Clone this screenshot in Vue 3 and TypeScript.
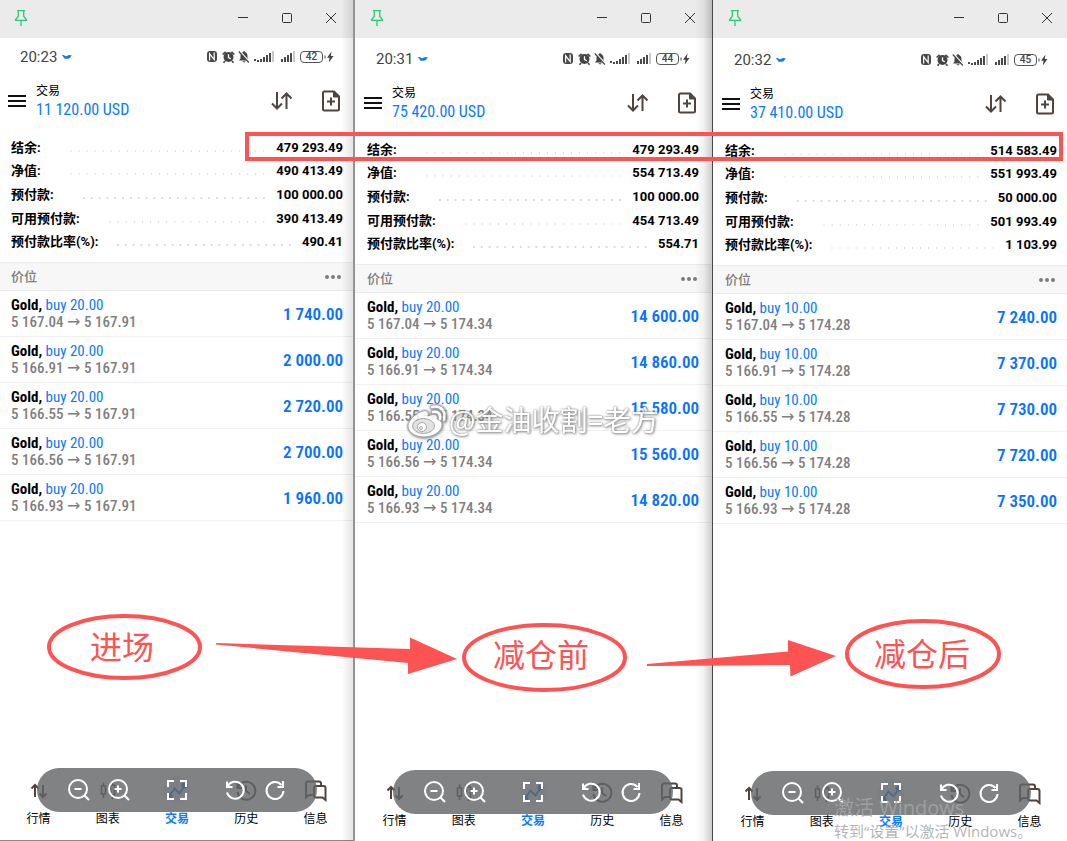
<script setup lang="ts">
interface Balance { label: string; value: string; tight?: boolean }
interface Position { volume: string; open: string; current: string; profit: string }
interface Panel {
  id: string
  time: string
  battery: string
  total: string
  balances: Balance[]
  positions: Position[]
}

const labels = ['结余:', '净值:', '预付款:', '可用预付款:', '预付款比率(%):']
const opens = ['5 167.04', '5 166.91', '5 166.55', '5 166.56', '5 166.93']

function makePanel(
  id: string, time: string, battery: string, total: string,
  values: string[], volume: string, current: string, profits: string[],
): Panel {
  return {
    id, time, battery, total,
    balances: labels.map((label, i) => ({ label, value: values[i], tight: i === 4 })),
    positions: opens.map((open, i) => ({ volume, open, current, profit: profits[i] })),
  }
}

const panels: Panel[] = [
  makePanel('entry', '20:23', '42', '11 120.00 USD',
    ['479 293.49', '490 413.49', '100 000.00', '390 413.49', '490.41'],
    '20.00', '5 167.91', ['1 740.00', '2 000.00', '2 720.00', '2 700.00', '1 960.00']),
  makePanel('before', '20:31', '44', '75 420.00 USD',
    ['479 293.49', '554 713.49', '100 000.00', '454 713.49', '554.71'],
    '20.00', '5 174.34', ['14 600.00', '14 860.00', '15 580.00', '15 560.00', '14 820.00']),
  makePanel('after', '20:32', '45', '37 410.00 USD',
    ['514 583.49', '551 993.49', '50 000.00', '501 993.49', '1 103.99'],
    '10.00', '5 174.28', ['7 240.00', '7 370.00', '7 730.00', '7 720.00', '7 350.00']),
]
const tabs = ['行情', '图表', '交易', '历史', '信息']
</script>

<template>
  <main class="desktop">
    <section v-for="p in panels" :key="p.id" class="window" :class="p.id">
      <header class="titlebar">
        <button class="pin" aria-label="Pin">
          <svg width="14" height="18" viewBox="0 0 14 18" fill="none" stroke="#2dc878" stroke-width="1.3">
            <path d="M3 1.7h8M4.3 2v5.2L1.5 10.8v.6h11v-.6L9.7 7.200V2M7 11.500V17" />
          </svg>
        </button>
        <div class="captions">
          <button aria-label="Minimize">
            <svg width="12" height="12" viewBox="0 0 12 12" fill="none" stroke="#333"><path d="M1 5.500h10" /></svg>
          </button>
          <button aria-label="Maximize">
            <svg width="12" height="12" viewBox="0 0 12 12" fill="none" stroke="#333"><rect x="1.500" y="1.500" width="9" height="9" rx="1" /></svg>
          </button>
          <button aria-label="Close">
            <svg width="12" height="12" viewBox="0 0 12 12" fill="none" stroke="#333"><path d="M1 1l10 10M11 1L1 11" /></svg>
          </button>
        </div>
      </header>

      <div class="phone">
        <div class="status">
          <span class="time">{{ p.time }}</span>
          <svg class="bird" width="10" height="6" viewBox="0 0 10 6" fill="#1677f5">
            <path d="M0 1C1.500.6 2.500 1.300 3.800 2.300 5 2.500 5.500 1 7.200 1 8.200 1 8.500 1.400 10 1.200 8.800 2 8.800 4.300 5.500 4.700 3.500 4.900 2 4.500 1.200 3.700L2.400 3.300C1.300 2.900.6 2.100 0 1Z" />
          </svg>
          <svg class="indicators" width="90" height="14" viewBox="0 0 90 14">
            <rect x="1" y="1" width="10" height="11" rx="3" fill="#4a4a4a" />
            <path d="M3.600 10.500V3.800L8.200 9.600V2.500" fill="none" stroke="#fff" stroke-width="1.200" />
            <circle cx="22.500" cy="7" r="5" fill="#444" />
            <path d="M16.600 4.500l3-2.700M28.400 4.500l-3-2.700M19 11l-1.500 1.800M26 11l1.500 1.800" stroke="#444" stroke-width="1.600" />
            <path d="M22.500 4.200v3.300l2.300 1.300" fill="none" stroke="#fff" stroke-width="1.300" />
            <path d="M33 10.500l1.500-2V6c0-2.500 1.300-3.500 2.700-4 0-1.200 1.700-1.200 1.700 0C40.500 2.500 41.500 4 41.500 6v2.500l1.500 2ZM36.500 11.200h3c-.4 1.600-2.600 1.600-3 0Z" fill="#444" />
            <path d="M33.500 1.200l10 11" stroke="#fff" stroke-width="2" />
            <path d="M32.800 1.500l10 11" stroke="#444" stroke-width="1.200" />
            <g fill="#4a4a4a">
              <rect x="48" y="9" width="2" height="2" /><rect x="51" y="10" width="2" height="2" />
              <rect x="54" y="9" width="2" height="3" /><rect x="57" y="7" width="2" height="5" />
              <rect x="60" y="5" width="2" height="7" /><rect x="63" y="3" width="2" height="9" />
              <rect x="75" y="9" width="2" height="3" /><rect x="78" y="7" width="2" height="5" />
              <rect x="81" y="5" width="2" height="7" /><rect x="84" y="3" width="2" height="9" />
            </g>
            <g fill="#c9c9c9"><rect x="66" y="1" width="2" height="11" /><rect x="87" y="1" width="2" height="11" /></g>
          </svg>
          <span class="battery">{{ p.battery }}</span>
          <svg class="bolt" width="10" height="12" viewBox="0 0 10 12" fill="#444">
            <path d="M.5 4.500h1v3h-1zM7.500.5L3 6.800h2.500L4.800 11.500 9.500 5H6.800Z" />
          </svg>
        </div>

        <div class="toolbar">
          <button class="menu" aria-label="Menu">
            <svg width="18" height="12" viewBox="0 0 18 12" stroke="#111" stroke-width="2"><path d="M0 1h18M0 6h18M0 11h18" /></svg>
          </button>
          <div class="heading">
            <h1>交易</h1>
            <p>{{ p.total }}</p>
          </div>
          <button class="sort" aria-label="Sort">
            <svg width="22" height="20" viewBox="0 0 22 20" fill="none" stroke="#50443f" stroke-width="2">
              <path d="M6 1v16M1 12.500l5 5 5-5M15.500 18V3M10.500 7.500l5-5 5 5" />
            </svg>
          </button>
          <button aria-label="New order">
            <svg width="20" height="22" viewBox="0 0 20 22" fill="none" stroke="#50443f" stroke-width="2">
              <path d="M3.500 1.500H13L18 6.500V19a1.500 1.500 0 0 1-1.500 1.500h-13A1.500 1.500 0 0 1 2 19V3a1.500 1.500 0 0 1 1.500-1.500ZM6 11.500h8M10 7.500v8" />
              <path d="M12.500 1.500v5.500H18Z" fill="#50443f" stroke-width="1" />
            </svg>
          </button>
        </div>

        <dl class="summary">
          <div v-for="b in p.balances" :key="b.label" :class="{ tight: b.tight }">
            <dt>{{ b.label }}</dt>
            <dd>{{ b.value }}</dd>
          </div>
        </dl>

        <div class="section">
          <h2>价位</h2>
          <button aria-label="More">
            <svg width="16" height="4" viewBox="0 0 16 4" fill="#7c7c7c"><circle cx="2" cy="2" r="2" /><circle cx="8" cy="2" r="2" /><circle cx="14" cy="2" r="2" /></svg>
          </button>
        </div>

        <ul class="positions">
          <li v-for="row in p.positions" :key="row.open">
            <div>
              <p class="symbol"><b>Gold,</b> <span>buy {{ row.volume }}</span></p>
              <p class="prices">{{ row.open }} <i>→</i> {{ row.current }}</p>
            </div>
            <strong>{{ row.profit }}</strong>
          </li>
        </ul>

        <div class="dock">
          <nav>
            <button v-for="(tab, i) in tabs" :key="tab" :class="{ active: i === 2 }">
              <svg width="24" height="24" viewBox="0 0 24 24" fill="none" stroke="#50443f" stroke-width="2">
                <path v-if="i === 0" d="M8 19V7M4.500 10.500L8 7l3.500 3.500M16 7v12M12.500 15.500L16 19l3.500-3.500" />
                <path v-else-if="i === 1" d="M7.500 4.500v3M7.500 16v4M5.500 8h4v8h-4zM16.500 3.500v3M16.500 17v4M14.500 7h4v10h-4z" stroke-width="1.600" />
                <g v-else-if="i === 2" stroke="#0a7aff" fill="#0a7aff"><path d="M4 18.500l5.500-8 5 5L20 7.500" fill="none" /><circle cx="4.500" cy="18.500" r="2" /><circle cx="19.500" cy="7.500" r="2" /></g>
                <path v-else-if="i === 3" d="M3.500 5v5h5M4 9.500A9 9 0 1 1 3.500 14M12 7.500v5.500l4 3" />
                <g v-else><path d="M11 17H6l-3 2.500V5.500Q3 3.500 5 3.500h11q2 0 2 2V8" /><path d="M12.500 8h8q2 0 2 2v12l-3-2.500h-6.500q-2 0-2-2v-7.500Q11 8 12.500 8Z" /></g>
              </svg>
              <span>{{ tab }}</span>
            </button>
          </nav>
          <div class="tools">
            <button aria-label="Zoom out">
              <svg width="24" height="24" viewBox="0 0 24 24"><circle cx="11" cy="11" r="9" /><path d="M17.500 17.500L22 22M7.500 11h7" /></svg>
            </button>
            <button aria-label="Zoom in">
              <svg width="24" height="24" viewBox="0 0 24 24"><circle cx="11" cy="11" r="9" /><path d="M17.500 17.500L22 22M7.500 11h7M11 7.500v7" /></svg>
            </button>
            <button class="fit" aria-label="Fit">
              <svg width="24" height="24" viewBox="0 0 24 24"><path d="M3 9V3h6M15 3h6v6M21 15v6h-6M9 21H3v-6" /></svg>
            </button>
            <button aria-label="Rotate left">
              <svg width="24" height="24" viewBox="0 0 24 24"><path d="M4 3.500V9h5.500M4.500 8.500A8.500 8.500 0 1 1 4 14.500" /></svg>
            </button>
            <button aria-label="Rotate right">
              <svg width="24" height="24" viewBox="0 0 24 24"><path d="M20 3v6h-5.500M18.500 7A8.500 8.500 0 1 0 20.500 13" /></svg>
            </button>
          </div>
        </div>
      </div>
    </section>

    <svg class="notes" viewBox="0 0 1067 841" preserveAspectRatio="xMidYMin meet">
      <g fill="none" stroke="#fd5352" stroke-width="4">
        <rect x="247" y="134" width="814" height="25" />
        <ellipse cx="124.500" cy="647" rx="75.500" ry="31" />
        <ellipse cx="544.500" cy="657.500" rx="80.500" ry="32.500" />
        <ellipse cx="923" cy="654" rx="76" ry="33" />
      </g>
      <g fill="#fd5352">
        <path d="M216 643l194 6v-11.500l47 21.500-49 15v-11L216 644.500Z" />
        <path d="M647 664l141-12.500V640l48 16-45.500 20.500L790 665l-143 1Z" />
        <g class="note-text" text-anchor="middle">
          <text x="122" y="659">进场</text>
          <text x="541" y="667">减仓前</text>
          <text x="922" y="666">减仓后</text>
        </g>
      </g>
      <g class="mark">
        <g fill="#fff" stroke="#999" stroke-width="1">
          <path d="M423 411c-7 2-15 9-15 15 0 7 8 11 16 11 10 0 18-6 18-12 0-4-3-5-5-6 1-5-3-6-9-3 1-4-1-6-5-5Z" />
          <ellipse cx="423.500" cy="426" rx="11" ry="7.500" fill="#ddd" />
          <circle cx="422" cy="427" r="4.500" />
          <circle cx="421" cy="428" r="1.500" />
        </g>
        <path d="M433 412c5-1 8 2 7 7M432 407c9-2 14 4 12 13" fill="none" stroke="#999" stroke-width="4" stroke-linecap="round" />
        <path d="M433 412c5-1 8 2 7 7M432 407c9-2 14 4 12 13" fill="none" stroke="#fff" stroke-width="2.500" stroke-linecap="round" />
        <text x="449" y="431">@金油收割=老方</text>
      </g>
    </svg>

    <aside class="activation">
      <p>激活 Windows</p>
      <p>转到“设置”以激活 Windows。</p>
    </aside>
  </main>
</template>

<style>
body { margin: 0; background: #fff; }
</style>

<style scoped>
.desktop {
  --cond: "Roboto Condensed", "Liberation Sans Narrow", Roboto, "Noto Sans CJK SC", sans-serif;
  position: relative;
  display: grid;
  grid-template-columns: 355fr 358fr 354fr;
  min-height: 100vh;
  font-family: Roboto, "Noto Sans CJK SC", sans-serif;
  color: #000;
}
p, h1, h2, ul, dl, dd { margin: 0; padding: 0; }
ul { list-style: none; }
button {
  display: grid;
  place-items: center;
  padding: 0;
  border: 0;
  background: none;
  font: inherit;
  color: inherit;
}
svg { display: block; }

.window {
  --drop: 0px;
  position: relative;
  display: flex;
  flex-direction: column;
  min-width: 0;
  overflow: hidden;
  background: #fff;
}
.before { --drop: 2px; }
.after { --drop: 3px; }
.window::after {
  content: "";
  position: absolute;
  inset: 0 0 0 auto;
  width: 14px;
  background: linear-gradient(90deg, transparent, rgba(0, 0, 0, 0.1));
  border-right: 2px solid #949494;
  box-sizing: border-box;
  pointer-events: none;
}
.before::after {
  width: 18px;
  background: linear-gradient(90deg, transparent, rgba(0, 0, 0, 0.05) 50%, rgba(0, 0, 0, 0.2));
  border-right: 1px solid #484848;
}
.after::after { display: none; }
.entry { box-shadow: inset 0 -1px #8a8a8a; }

.titlebar {
  display: flex;
  justify-content: space-between;
  height: 38px;
  padding: 0 2px 0 15px;
  background: #ebebeb;
}
.entry .titlebar { padding-left: 14px; }
.before .titlebar { padding-right: 1px; }
.after .titlebar { padding-right: 0; margin-right: -2px; }
.pin { height: 36px; }
.captions { display: flex; }
.captions button { width: 44px; height: 36px; }

.phone {
  flex: 1;
  display: flex;
  flex-direction: column;
  padding: var(--drop) 0 calc(3px - var(--drop));
}
.entry .phone { margin-left: -1px; }
.before .phone { margin-right: 2px; }
.after .phone { margin-right: -2px; }

.status {
  display: flex;
  align-items: center;
  height: 38px;
  padding: 0 21px;
  color: #444;
}
.time { font-size: 15px; line-height: 20px; }
.bird { margin-left: 5px; }
.indicators { margin-left: auto; }
.battery {
  box-sizing: border-box;
  width: 23px;
  height: 12px;
  margin-left: 4px;
  border: 1px solid #555;
  border-radius: 4px;
  font: 500 10px/10px Roboto, sans-serif;
  text-align: center;
}
.bolt { margin-left: 1px; }

.toolbar {
  display: flex;
  align-items: center;
  height: 50px;
  padding: 0 14px 0 9px;
}
.heading { flex: 1; margin-left: 10px; }
.heading h1 { font-size: 12px; line-height: 18px; font-weight: 400; }
.heading p { font-family: var(--cond); font-size: 16px; line-height: 20px; color: #0a7aff; }
.sort { margin-right: 28px; }

.summary {
  display: flex;
  flex-direction: column;
  height: 118px;
  padding: 10px 12px 8px;
  font-size: 13px;
  font-weight: 700;
}
.summary > div { flex: 1; display: flex; align-items: center; }
.summary > div::before {
  content: "";
  order: 1;
  flex: 1;
  height: 2px;
  margin: 6px 8px 0 26px;
  background: radial-gradient(circle, #dcdcdc 1px, transparent 1px) 0 0 / 8px 2px round;
}
.summary > .tight::before { margin-left: 16px; }
.summary dt { line-height: 20px; }
.summary dd { order: 2; line-height: 20px; }

.section {
  display: flex;
  align-items: center;
  justify-content: space-between;
  height: 27px;
  padding: 0 14px 0 12px;
  border: solid #ebebeb;
  border-width: 1px 0;
  background: #f7f7f7;
}
.section h2 { font-size: 13px; line-height: 20px; font-weight: 500; color: #7c7c7c; }

.positions { font-family: var(--cond); }
.positions li {
  display: flex;
  align-items: center;
  justify-content: space-between;
  height: 45px;
  padding: 0 12px;
  border-bottom: 1px solid #efefef;
}
.symbol { font-size: 15px; line-height: 17px; }
.symbol b { font-weight: 700; }
.symbol span { color: #0a7aff; }
.prices { font-size: 15px; line-height: 16px; font-weight: 500; color: #7f7f7f; }
.prices i { font: 16px/12px "DejaVu Sans", sans-serif; }
.positions strong { font-size: 17px; line-height: 20px; font-weight: 600; color: #0a72ff; }

.dock { position: relative; margin-top: auto; padding-bottom: 10px; }
nav { display: grid; grid-template-columns: repeat(5, 1fr); padding: 0 5px; }
nav span { font-size: 12px; line-height: 18px; margin-top: 8px; }
nav .active { color: #0a7aff; font-weight: 700; }
nav .active svg { border-radius: 16px; background: #eaf3ff; box-shadow: 0 0 0 2px #eaf3ff; }
.tools {
  position: absolute;
  top: -10px;
  left: 50%;
  display: flex;
  align-items: center;
  justify-content: center;
  gap: 16px;
  width: 280px;
  height: 44px;
  border-radius: 22px;
  background: rgba(99, 101, 104, 0.81);
  transform: translateX(-50%);
}
.tools svg { fill: none; stroke: #fff; stroke-width: 2; }
.tools .fit { margin: 0 18px; }

.notes { position: absolute; inset: 0; width: 100%; height: 100%; pointer-events: none; }
.note-text { font: 400 32px "Noto Sans CJK SC", sans-serif; }
.mark text { font: 28px "Noto Sans CJK SC", sans-serif; fill: #fff; }
.mark { filter: drop-shadow(0 0 1px #777) drop-shadow(1px 1px 1px #999); opacity: 0.85; }

.activation {
  position: absolute;
  right: 30px;
  bottom: 0;
  width: 203px;
  color: rgba(165, 165, 165, 0.85);
  font-family: "Open Sans", "Noto Sans CJK SC", sans-serif;
  font-weight: 400;
  white-space: nowrap;
  pointer-events: none;
}
.activation p { font-size: 20px; line-height: 26px; }
.activation p + p { font-size: 15px; line-height: 20px; }
</style>
